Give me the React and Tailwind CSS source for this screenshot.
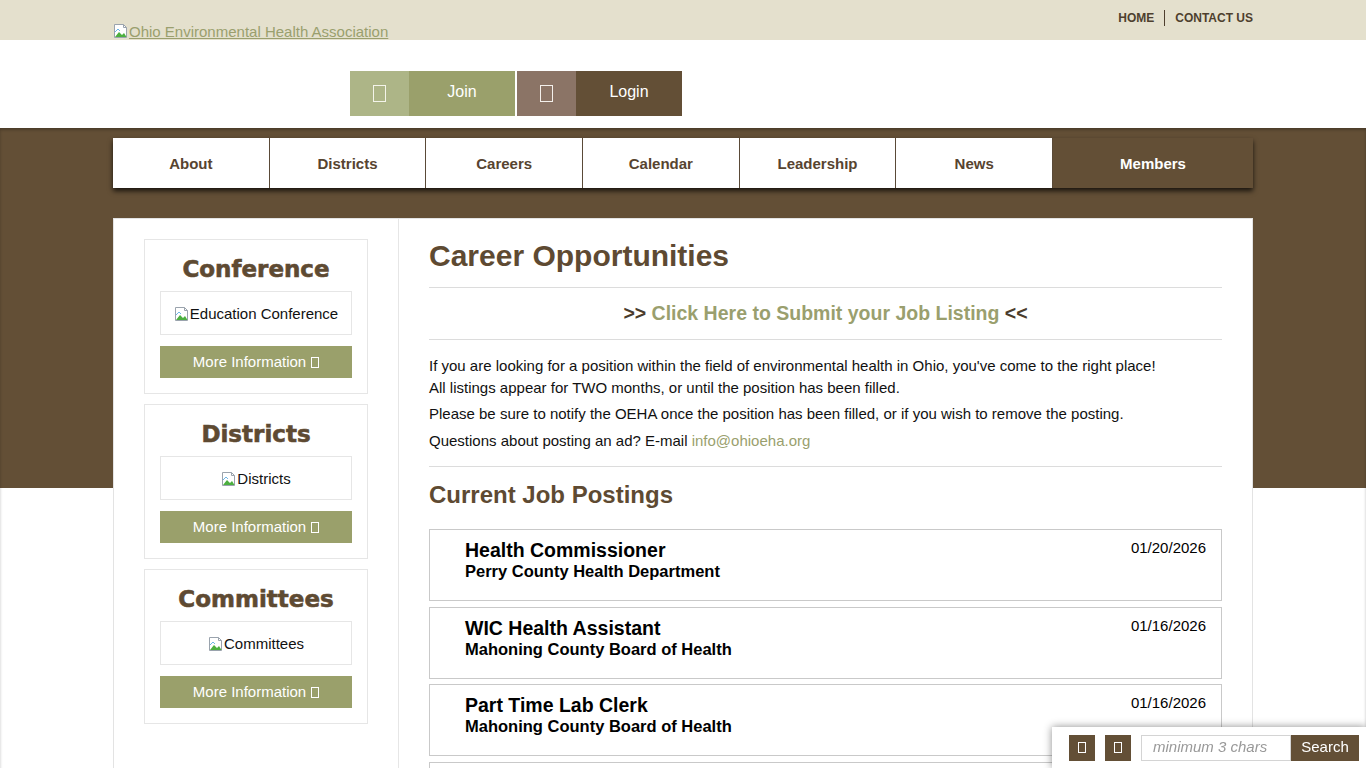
import React from "react";

const Tofu = ({ className = "" }) => (
  <span className={"inline-block border border-current align-middle " + className} />
);

const BrokenImg = () => (
  <svg width="16" height="16" viewBox="0 0 16 16" className="inline-block align-[-2px]">
    <path d="M1.5 1.5h9l3 3v10h-12z" fill="#fff" stroke="#9aa3ad" />
    <path d="M10.5 1.5v3h3" fill="none" stroke="#9aa3ad" />
    <path d="M2 14l4-5 3 3 2-2 2.5 4z" fill="#4caf3f" />
    <path d="M2 9l3-3 2 2" fill="none" stroke="#6fb6e6" strokeWidth="1" />
  </svg>
);

const SideCard = ({ title, alt }) => (
  <div className="border border-[#e6e6e6] px-[15px] pt-[13px] pb-[15px]">
    <h3 className="h-[30px] pt-[1px] text-center font-['DejaVu_Sans',sans-serif] font-bold text-[23px] leading-[30px] text-[#5e4a32] [-webkit-text-stroke:0.6px_#5e4a32]">
      {title}
    </h3>
    <div className="mt-[8px] h-[44px] pt-[2px] border border-[#e6e6e6] flex items-center justify-center text-[15px] text-[#111]">
      <BrokenImg />
      <span>{alt}</span>
    </div>
    <div className="mt-[11px] h-[32px] bg-[#9aa06b] flex items-center justify-center text-white text-[15px] gap-[5px]">
      <span>More Information</span>
      <Tofu className="w-[8px] h-[11px]" />
    </div>
  </div>
);

const Job = ({ title, org, date }) => (
  <div className="h-[72px] border border-[#c9c9c9] flex justify-between">
    <div className="pl-[35px] pt-[9px]">
      <div className="text-[19.5px] leading-[22px] font-bold text-black">{title}</div>
      <div className="text-[16.5px] leading-[20px] font-bold text-black">{org}</div>
    </div>
    <div className="pr-[15px] pt-[9px] text-[15px] leading-[18px] text-black">{date}</div>
  </div>
);

export default function App() {
  const navItems = ["About", "Districts", "Careers", "Calendar", "Leadership", "News"];
  return (
    <div className="min-h-screen bg-white font-['Liberation_Sans',Arial,sans-serif] text-[#222]">
      {/* top bar */}
      <div className="bg-[#e4e0cd] h-[40px]">
        <div className="w-[1140px] mx-auto flex justify-between items-start">
          <a className="pt-[23px] text-[15px] leading-[17px] text-[#9a9f6e] underline flex items-start">
            <BrokenImg />
            <span>Ohio Environmental Health Association</span>
          </a>
          <div className="pt-[10px] flex items-center text-[12px] leading-[14px] font-bold text-[#4e3f2e]">
            <span className="pr-[10px]">HOME</span>
            <span className="w-px h-[16px] bg-[#4e3f2e]" />
            <span className="pl-[10px]">CONTACT US</span>
          </div>
        </div>
      </div>

      {/* header */}
      <div className="h-[88px]">
        <div className="w-[1140px] mx-auto pl-[237px] pt-[31px] flex gap-[2px]">
          <div className="flex h-[45px]">
            <div className="w-[59px] bg-[#adb587] flex items-center justify-center text-[#f4f4ea]">
              <Tofu className="w-[13px] h-[17px]" />
            </div>
            <div className="w-[106px] bg-[#9aa06b] flex items-center justify-center text-white text-[16px] pb-[3px]">Join</div>
          </div>
          <div className="flex h-[45px]">
            <div className="w-[59px] bg-[#8b7466] flex items-center justify-center text-[#f4f0ec]">
              <Tofu className="w-[13px] h-[17px]" />
            </div>
            <div className="w-[106px] bg-[#634f36] flex items-center justify-center text-white text-[16px] pb-[3px]">Login</div>
          </div>
        </div>
      </div>

      {/* brown band + content */}
      <div className="bg-[linear-gradient(#634f36_0,#634f36_360px,#ffffff_360px)] shadow-[inset_0_2px_3px_rgba(0,0,0,0.25)] pt-[10px]">
        <div className="w-[1140px] mx-auto">
          <nav className="flex h-[50px] shadow-[0_3px_5px_rgba(0,0,0,0.75)]">
            {navItems.map((n) => (
              <div key={n} className="flex-1 bg-white border-r border-[#5a4a38] flex items-center justify-center pt-[2px] text-[15px] font-bold text-[#574430]">
                {n}
              </div>
            ))}
            <div className="w-[200px] bg-[#634f36] flex items-center justify-center pt-[2px] text-[15px] font-bold text-white">Members</div>
          </nav>

          <div className="mt-[30px] bg-white border border-[#e3e3e3] flex">
            <aside className="w-[285px] shrink-0 border-r border-[#e6e6e6] pt-[20px] pl-[30px] pr-[30px] pb-[40px] flex flex-col gap-[10px]">
              <SideCard title="Conference" alt="Education Conference" />
              <SideCard title="Districts" alt="Districts" />
              <SideCard title="Committees" alt="Committees" />
            </aside>

            <main className="flex-1 px-[30px] pt-[20px] pb-[20px]">
              <h1 className="text-[30px] leading-[34px] font-bold text-[#5e4a32]">Career Opportunities</h1>
              <hr className="mt-[14px] border-t border-[#dcdcdc]" />
              <p className="mt-[12px] text-center text-[19.5px] leading-[26px] font-bold text-[#4a3c2c]">
                &gt;&gt; <a className="text-[#9a9f6e]">Click Here to Submit your Job Listing</a> &lt;&lt;
              </p>
              <hr className="mt-[13px] border-t border-[#dcdcdc]" />
              <div className="mt-[15px] text-[15px] leading-[22px] text-[#111]">
                <p>
                  If you are looking for a position within the field of environmental health in Ohio, you've come to the right place!
                  <br />
                  All listings appear for TWO months, or until the position has been filled.
                </p>
                <p className="mt-[4px]">Please be sure to notify the OEHA once the position has been filled, or if you wish to remove the posting.</p>
                <p className="mt-[5px]">
                  Questions about posting an ad? E-mail <a className="text-[#9a9f6e]">info@ohioeha.org</a>
                </p>
              </div>
              <hr className="mt-[14px] border-t border-[#dcdcdc]" />
              <h2 className="mt-[13px] text-[24px] leading-[30px] font-bold text-[#5e4a32]">Current Job Postings</h2>
              <div className="mt-[19px] flex flex-col gap-[5.5px]">
                <Job title="Health Commissioner" org="Perry County Health Department" date="01/20/2026" />
                <Job title="WIC Health Assistant" org="Mahoning County Board of Health" date="01/16/2026" />
                <Job title="Part Time Lab Clerk" org="Mahoning County Board of Health" date="01/16/2026" />
                <div className="h-[72px] border border-[#c9c9c9]" />
              </div>
            </main>
          </div>
        </div>
      </div>

      {/* fixed search widget */}
      <div className="fixed bottom-0 right-0 w-[314px] h-[41px] bg-white shadow-[0_0_8px_rgba(0,0,0,0.45)] flex items-center pl-[17px] gap-[10px]">
        <div className="w-[26px] h-[26px] bg-[#634f36] flex items-center justify-center text-white">
          <Tofu className="w-[8px] h-[11px]" />
        </div>
        <div className="w-[26px] h-[26px] bg-[#634f36] flex items-center justify-center text-white">
          <Tofu className="w-[8px] h-[11px]" />
        </div>
        <div className="flex">
          <div className="w-[150px] h-[26px] border border-[#d4d4d4] flex items-center pl-[11px] text-[15px] italic text-[#999]">
            minimum 3 chars
          </div>
          <div className="w-[68px] h-[26px] bg-[#634f36] flex items-center justify-center text-white text-[15px]">Search</div>
        </div>
      </div>
    </div>
  );
}
